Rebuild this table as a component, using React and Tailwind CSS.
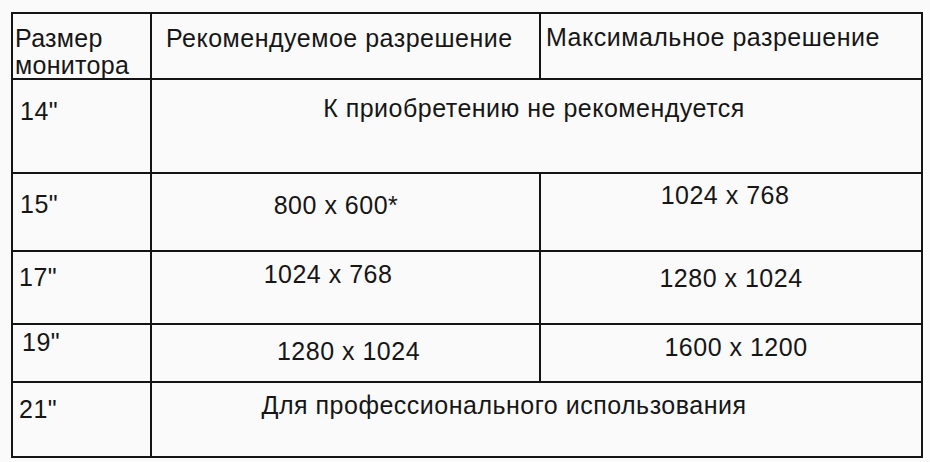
export default function App() {
  const font = { fontFamily: '"Liberation Sans", Arial, sans-serif' };
  return (
    <div className="w-[930px] h-[462px] bg-[#fafafa] pt-[12px] pl-[11px]" style={font}>
      <div className="grid w-fit grid-cols-[137px_387px_380px] grid-rows-[64px_92px_76px_71px_56px_73px] gap-[2px] p-[2px] bg-[#141414] text-[25px] leading-[27px] tracking-[0.5px] text-[#161616]">
        {/* header */}
        <div className="bg-[#fafafa] pt-[11px] pl-[2px] tracking-[0.3px]">
          <div>Размер</div>
          <div>монитора</div>
        </div>
        <div className="bg-[#fafafa] pt-[11px] pl-[14px] whitespace-nowrap">Рекомендуемое разрешение</div>
        <div className="bg-[#fafafa] pt-[10px] pl-[5px] whitespace-nowrap">Максимальное разрешение</div>

        {/* 14" */}
        <div className="bg-[#fafafa] pt-[18px] pl-[7px]">14"</div>
        <div className="col-span-2 bg-[#fafafa] pt-[15px] pr-[5px] text-center whitespace-nowrap">К приобретению не рекомендуется</div>

        {/* 15" */}
        <div className="bg-[#fafafa] pt-[17px] pl-[7px]">15"</div>
        <div className="bg-[#fafafa] pt-[18px] pr-[19px] text-center whitespace-nowrap">800 x 600*</div>
        <div className="bg-[#fafafa] pt-[8px] pr-[12px] text-center whitespace-nowrap">1024 x 768</div>

        {/* 17" */}
        <div className="bg-[#fafafa] pt-[12px] pl-[6px]">17"</div>
        <div className="bg-[#fafafa] pt-[9px] pr-[35px] text-center whitespace-nowrap">1024 x 768</div>
        <div className="bg-[#fafafa] pt-[13px] text-center whitespace-nowrap">1280 x 1024</div>

        {/* 19" */}
        <div className="bg-[#fafafa] pt-[4px] pl-[9px]">19"</div>
        <div className="bg-[#fafafa] pt-[13px] pl-[6px] text-center whitespace-nowrap">1280 x 1024</div>
        <div className="bg-[#fafafa] pt-[9px] pl-[10px] text-center whitespace-nowrap">1600 x 1200</div>

        {/* 21" */}
        <div className="bg-[#fafafa] pt-[13px] pl-[6px]">21"</div>
        <div className="col-span-2 bg-[#fafafa] pt-[9px] pr-[65px] text-center whitespace-nowrap">Для профессионального использования</div>
      </div>
    </div>
  );
}
